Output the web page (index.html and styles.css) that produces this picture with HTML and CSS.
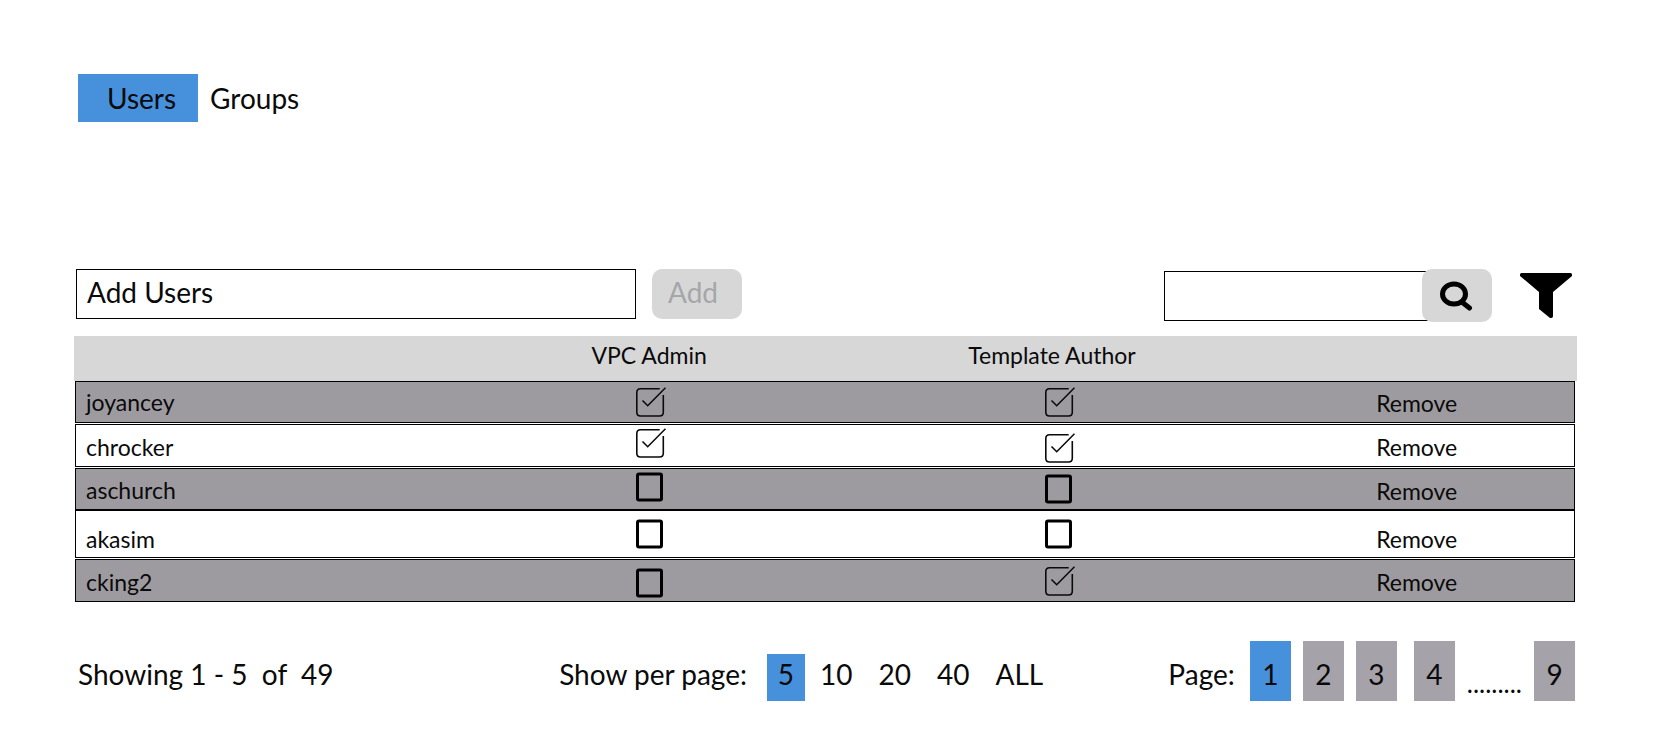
FILE: index.html
```html
<!DOCTYPE html>
<html lang="en">
<head>
<meta charset="utf-8">
<meta name="viewport" content="width=device-width, initial-scale=1">
<title>Users</title>
<link rel="stylesheet" href="styles.css">
</head>
<body>
<main class="page">
  <nav class="tabs" aria-label="Sections">
    <a class="tab tab-active" href="#users" aria-current="page">Users</a>
    <a class="tab" href="#groups">Groups</a>
  </nav>

  <div class="toolbar">
    <form class="add-form">
      <input class="field add-field" type="text" placeholder="Add Users" aria-label="Add Users">
      <button class="add-button" type="button" disabled>Add</button>
    </form>
    <form class="search-form">
      <input class="field search-field" type="text" aria-label="Search users">
      <button class="search-button" type="button" aria-label="Search">
        <svg width="34" height="30" viewBox="0 0 34 30" fill="none" stroke="#000" stroke-width="5">
          <ellipse cx="14" cy="13" rx="11.5" ry="10"/>
          <path d="M22.5 21.5L29.5 27" stroke-linecap="round"/>
        </svg>
      </button>
      <button class="filter-button" type="button" aria-label="Filter">
        <svg width="52" height="45" viewBox="0 0 52 45">
          <path d="M1.5 0H50.500Q52 0 52 1.500V3L33 19V43.500Q32.500 45 31 45H30L19 36V19L0 3V1.500Q0 0 1.500 0Z"/>
        </svg>
      </button>
    </form>
  </div>

  <table class="users">
    <thead>
      <tr class="head">
        <th aria-label="User"></th>
        <th>VPC Admin</th>
        <th class="head-author">Template Author</th>
        <th aria-label="Action"></th>
      </tr>
    </thead>
    <tbody>
      <tr class="row shaded">
        <td class="name high">joyancey</td>
        <td class="box"><input type="checkbox" aria-label="joyancey VPC Admin" checked></td>
        <td class="box"><input type="checkbox" aria-label="joyancey Template Author" checked></td>
        <td class="action"><button type="button">Remove</button></td>
      </tr>
      <tr class="row medium">
        <td class="name">chrocker</td>
        <td class="box high"><input type="checkbox" aria-label="chrocker VPC Admin" checked></td>
        <td class="box low"><input type="checkbox" aria-label="chrocker Template Author" checked></td>
        <td class="action"><button type="button">Remove</button></td>
      </tr>
      <tr class="row shaded">
        <td class="name">aschurch</td>
        <td class="box high"><input type="checkbox" aria-label="aschurch VPC Admin"></td>
        <td class="box"><input type="checkbox" aria-label="aschurch Template Author"></td>
        <td class="action low"><button type="button">Remove</button></td>
      </tr>
      <tr class="row tall">
        <td class="name low">akasim</td>
        <td class="box"><input type="checkbox" aria-label="akasim VPC Admin"></td>
        <td class="box"><input type="checkbox" aria-label="akasim Template Author"></td>
        <td class="action low"><button type="button">Remove</button></td>
      </tr>
      <tr class="row shaded medium">
        <td class="name">cking2</td>
        <td class="box low"><input type="checkbox" aria-label="cking2 VPC Admin"></td>
        <td class="box"><input type="checkbox" aria-label="cking2 Template Author" checked></td>
        <td class="action"><button type="button">Remove</button></td>
      </tr>
    </tbody>
  </table>

  <footer class="footer">
    <p class="summary">Showing 1 - 5&nbsp; of&nbsp; 49</p>
    <div class="sizes">
      <span class="sizes-label">Show per page:</span>
      <button class="size size-active" type="button">5</button>
      <button class="size" type="button">10</button>
      <button class="size" type="button">20</button>
      <button class="size" type="button">40</button>
      <button class="size" type="button">ALL</button>
    </div>
    <nav class="pages" aria-label="Pages">
      <span class="pages-label">Page:</span>
      <button class="page-button page-current" type="button">1</button>
      <button class="page-button" type="button">2</button>
      <button class="page-button" type="button">3</button>
      <button class="page-button page-last-near" type="button">4</button>
      <span class="dots">.........</span>
      <button class="page-button" type="button">9</button>
    </nav>
  </footer>
</main>
</body>
</html>
```
FILE: styles.css
```css
* {
  box-sizing: border-box;
}

body {
  margin: 0;
  background: #fff;
  color: #0a0a0a;
  font-family: Lato, "Open Sans", sans-serif;
  font-size: 28px;
  line-height: 36px;
}

button,
input {
  margin: 0;
  padding: 0;
  border: 0;
  background: none;
  color: inherit;
  font: inherit;
}

.page {
  padding: 74px 83px 40px 74px;
}

.tabs {
  display: flex;
  margin-left: 4px;
}

.tab {
  padding: 6px 12px;
  color: inherit;
  text-decoration: none;
}

.tab-active {
  padding-right: 22px;
  padding-left: 29px;
  background: #4790dc;
}

.toolbar {
  display: flex;
  justify-content: space-between;
  align-items: flex-start;
  margin: 147px 5px 14px 2px;
}

.add-form {
  display: flex;
  flex: 0 1 666px;
  gap: 16px;
  min-width: 0;
}

.field {
  min-width: 0;
  height: 50px;
  border: 1px solid #000;
  border-radius: 0;
  background: #fff;
}

.add-field {
  flex: 1;
  padding: 0 10px 4px;
}

.add-field::placeholder {
  color: #0a0a0a;
  opacity: 1;
}

.add-button {
  width: 90px;
  height: 50px;
  padding: 0 8px 4px 0;
  border-radius: 10px;
  background: #d7d7d7;
  color: #a5a6a9;
}

.search-form {
  display: flex;
  align-items: center;
  flex: 0 1 408px;
  min-width: 0;
}

.search-field {
  flex: 1;
  padding: 0 20px 0 10px;
}

.search-button {
  display: grid;
  place-items: center;
  width: 70px;
  height: 53px;
  margin-left: -8px;
  border-radius: 10px;
  background: #d7d7d7;
}

.filter-button {
  margin-left: 28px;
  line-height: 0;
}

.users {
  display: block;
  font-size: 23px;
  line-height: 30px;
}

.users thead,
.users tbody {
  display: block;
}

.head,
.row {
  display: grid;
  grid-template-columns: 373fr 402fr 416fr 309fr;
}

.head {
  min-height: 45px;
  background: #d7d7d7;
}

.head th {
  padding: 4px 0 11px;
  font-weight: 400;
}

.head .head-author {
  padding-right: 14px;
}

.row {
  min-height: 42px;
  margin: 0 2px 1px 1px;
  border: 1px solid #000;
}

.row.shaded {
  background: #9e9ba0;
}

.row.shaded:has(+ .tall) {
  margin-bottom: 0;
}

.row.medium {
  min-height: 43px;
}

.row.tall {
  min-height: 48px;
}

.row td {
  display: flex;
  align-items: center;
  padding: 3px 0;
}

.row td.high {
  align-items: flex-start;
}

.row td.low {
  align-items: flex-end;
}

.row .name {
  padding: 5px 0 3px 10px;
}

.row .box,
.row .action {
  justify-content: center;
}

.row .box {
  padding-left: 4px;
}

.row .action {
  padding: 5px 6px 3px 0;
}

.box input {
  width: 30px;
  height: 30px;
  appearance: none;
  background: url("data:image/svg+xml,%3Csvg xmlns='http://www.w3.org/2000/svg' viewBox='0 0 30 30'%3E%3Crect x='1.5' y='2' width='24' height='26' rx='1.500' fill='none' stroke='%23000' stroke-width='3'/%3E%3C/svg%3E") center / 30px 30px no-repeat;
}

.box input:checked {
  background-image: url("data:image/svg+xml,%3Csvg xmlns='http://www.w3.org/2000/svg' viewBox='0 0 30 30' fill='none' stroke='%230a0a0a' stroke-width='1.600'%3E%3Cpath d='M23.700 1.800H4.500Q.8 1.800 .8 5.500V25.200Q.8 29 4.500 29H23.500Q27.300 29 27.300 25.200V8M6.500 13.500L11.700 18.700L29.500 .7'/%3E%3C/svg%3E");
}

.footer {
  display: grid;
  grid-template-columns: 481fr 609fr auto;
  align-items: end;
  margin: 39px 2px 0 4px;
}

.summary {
  margin: 0;
}

.sizes,
.pages {
  display: flex;
  align-items: flex-end;
}

.summary,
.sizes-label,
.pages-label {
  padding-bottom: 9px;
}

.size {
  padding: 2px 13px 9px;
}

.size-active {
  width: 38px;
  margin: 0 2px 0 20px;
  padding-right: 0;
  padding-left: 0;
  background: #4790dc;
}

.pages {
  gap: 12px;
}

.pages-label {
  margin-right: 3px;
}

.page-button {
  width: 41px;
  height: 60px;
  padding: 15px 0 9px;
  background: #a5a2a9;
}

.page-current {
  background: #4790dc;
}

.page-last-near {
  margin-left: 5px;
}

.dots {
  font-size: 26px;
}
```
